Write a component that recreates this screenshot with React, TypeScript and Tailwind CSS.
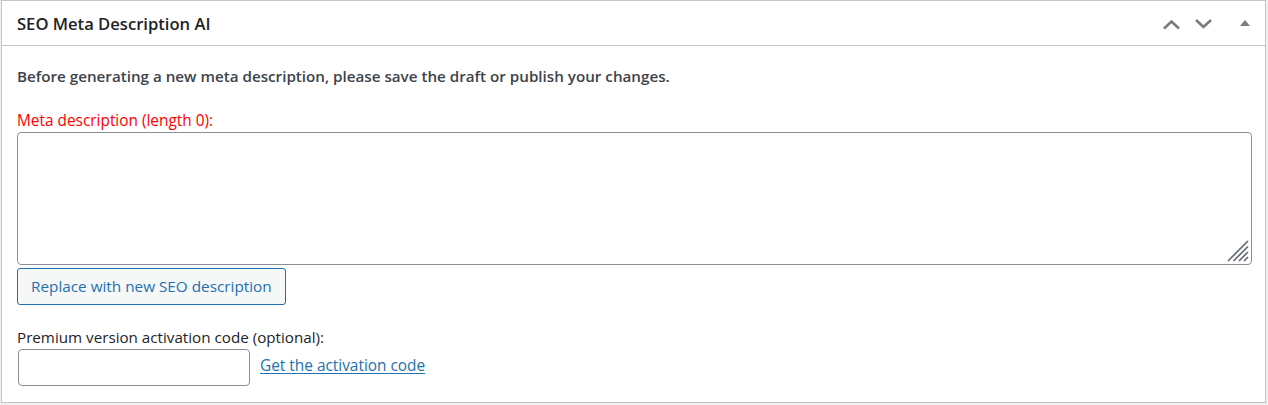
import React from "react";

function ChevUp() {
  return (
    <svg width="20" height="20" viewBox="0 0 20 20" className="block">
      <polyline points="2,14.5 9.5,7.5 17,14.5" fill="none" stroke="#787c82" strokeWidth="2.6" />
    </svg>
  );
}
function ChevDown() {
  return (
    <svg width="20" height="20" viewBox="0 0 20 20" className="block">
      <polyline points="2,6 9.5,13 17,6" fill="none" stroke="#787c82" strokeWidth="2.6" />
    </svg>
  );
}
function Tri() {
  return (
    <svg width="12" height="12" viewBox="0 0 12 12" className="block">
      <polygon points="1,9 6,3 11,9" fill="#787c82" />
    </svg>
  );
}

export default function App() {
  const font = { fontFamily: '"Open Sans", "Noto Sans", sans-serif' };
  return (
    <div className="w-full h-[405px] bg-[#f0f0f1]" style={font}>
      <div className="ml-[1px] w-[1265px] h-[403px] border border-[#c3c4c7] bg-white">
        <div className="h-[45px] border-b border-[#c3c4c7] flex items-center pl-[15px] pr-[14px]">
          <h2 className="text-[16.6px] font-semibold text-[#1d2327] flex-1 leading-none mt-[2px]">SEO Meta Description AI</h2>
          <div className="flex items-center mt-[1px]">
            <div className="w-[20px] h-[20px]"><ChevUp /></div>
            <div className="w-[20px] h-[20px] ml-[12px]"><ChevDown /></div>
            <div className="w-[12px] h-[12px] ml-[25px] mb-[1px]"><Tri /></div>
          </div>
        </div>
        <div className="pl-[15px]">
          <p className="mt-[20px] leading-[20px] text-[15.2px] font-semibold text-[#3c434a]">
            Before generating a new meta description, please save the draft or publish your changes.
          </p>
          <div className="mt-[25px] leading-[20px] text-[15.4px] text-[#ff0000]">Meta description (length 0):</div>
          <div className="relative mt-[1px] w-[1235px] h-[133px] border border-[#8c8f94] rounded-[4px] bg-white">
            <svg width="24" height="24" viewBox="0 0 24 24" className="absolute right-[1px] bottom-[1px]">
              <line x1="2" y1="22" x2="22" y2="2" stroke="#646970" strokeWidth="1.7" />
              <line x1="7.5" y1="22" x2="22" y2="7.5" stroke="#646970" strokeWidth="1.7" />
              <line x1="13" y1="22" x2="22" y2="13" stroke="#646970" strokeWidth="1.7" />
              <line x1="18" y1="22" x2="22" y2="18" stroke="#646970" strokeWidth="1.7" />
            </svg>
          </div>
          <button className="mt-[3px] h-[37px] px-[13px] border border-[#2271b1] rounded-[3px] bg-[#f6f7f7] text-[#2271b1] text-[15.3px] leading-none">
            Replace with new SEO description
          </button>
          <div className="mt-[22px] leading-[20px] text-[15.2px] text-[#1d2327]">Premium version activation code (optional):</div>
          <div className="mt-[2px] flex items-center">
            <div className="ml-[1px] w-[232px] h-[37px] border border-[#8c8f94] rounded-[4px] bg-white" />
            <a href="#" className="ml-[10px] -mt-[3px] text-[15.4px] text-[#2271b1] underline underline-offset-2">Get the activation code</a>
          </div>
        </div>
      </div>
    </div>
  );
}
